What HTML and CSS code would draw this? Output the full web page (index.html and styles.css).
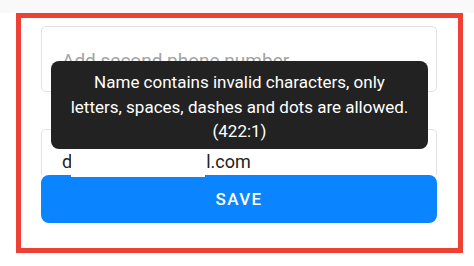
FILE: index.html
```html
<!DOCTYPE html>
<html>
<head>
<meta charset="utf-8">
<link rel="stylesheet" href="styles.css">
</head>
<body>
<div class="frame">
  <div class="field first"><span class="placeholder">Add second phone number</span></div>
  <div class="field second"><span class="value">d<span class="gap"></span>l.com</span></div>
  <div class="save">SAVE</div>
  <div class="redact"></div>
  <div class="toast">Name contains invalid characters, only<br>letters, spaces, dashes and dots are allowed.<br>(422:1)</div>
</div>
</body>
</html>
```
FILE: styles.css
```css
html, body {
  margin: 0;
  padding: 0;
  background: #ffffff;
  font-family: Roboto, "Noto Sans", sans-serif;
}
body {
  width: 474px;
  height: 266px;
  overflow: hidden;
  background: linear-gradient(#f9f9f9 0, #f9f9f9 13px, #ffffff 13px);
}
.frame {
  position: relative;
  box-sizing: border-box;
  margin: 13px 0 0 16px;
  width: 447px;
  height: 240px;
  border: 5px solid #ee4035;
  background: #ffffff;
  padding: 8px 21px 25px 20px;
}
.field {
  box-sizing: border-box;
  width: 396px;
  border: 1px solid #e2e2e2;
  border-radius: 5px;
  background: #fff;
  padding-left: 20px;
}
.first {
  height: 66px;
  display: flex;
  align-items: center;
  font-size: 19px;
  padding-top: 2px;
}
.placeholder {
  color: #a3a3a3;
}
.second {
  margin-top: 37px;
  height: 46px;
  border-bottom: none;
  border-radius: 5px 5px 0 0;
  padding-top: 22px;
  line-height: 20px;
  font-size: 18px;
}
.value {
  color: #222222;
}
.gap {
  display: inline-block;
  width: 134px;
}
.save {
  width: 396px;
  height: 48px;
  border-radius: 8px;
  background: #0a84ff;
  color: #ffffff;
  font-size: 17px;
  font-weight: 500;
  letter-spacing: 1.4px;
  display: flex;
  align-items: center;
  justify-content: center;
}
.redact {
  position: absolute;
  left: 50px;
  top: 131px;
  width: 134px;
  height: 28px;
  background: #ffffff;
}
.toast {
  position: absolute;
  left: 30px;
  top: 43px;
  box-sizing: border-box;
  width: 377px;
  height: 88px;
  background: #222222;
  border-radius: 8px;
  color: #ffffff;
  font-size: 17px;
  line-height: 24.5px;
  text-align: center;
  padding-top: 9px;
}
```
